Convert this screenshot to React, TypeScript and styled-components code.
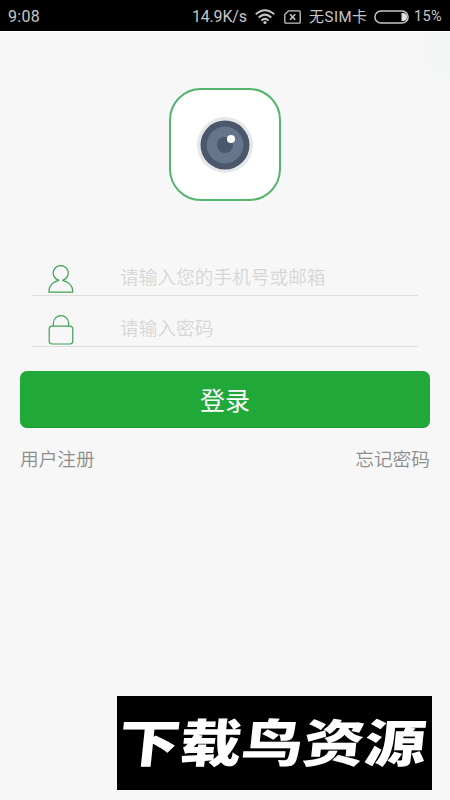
import React from "react";
import styled, { createGlobalStyle } from "styled-components";

const COLOR = {
  GREEN: "#20a838",
  ICON_GREEN: "#3da356",
  LINE: "#dedede",
  HINT: "#d6d6d6",
  TEXT: "#8d8d8d",
  STATUS: "#c6c6c6",
};

const GlobalStyle = createGlobalStyle`
  * {
    box-sizing: border-box;
  }

  body {
    margin: 0;
    background: #f7f7f7;
    font-family: Roboto, "Noto Sans CJK SC", sans-serif;
  }
`;

const Page = styled.div`
  display: flex;
  flex-direction: column;
  width: 450px;
  height: 800px;
  overflow: hidden;
  background: radial-gradient(circle at 455px 50px, #f3f6f4 0, #f7f7f7 65px);
`;

const StatusBar = styled.header`
  display: flex;
  flex: none;
  align-items: center;
  height: 31px;
  padding: 2px 8px 0;
  background: #000;
  color: ${COLOR.STATUS};
  line-height: 20px;
  white-space: nowrap;

  svg {
    display: block;
    flex: none;
  }
`;

const StatusText = styled.span<{ $width: number; $size?: number; $spacing?: number }>`
  flex: none;
  width: ${({ $width }) => $width}px;
  font-size: ${({ $size = 16 }) => $size}px;
  letter-spacing: ${({ $spacing = 0 }) => $spacing}px;
`;

const Spacer = styled.div<{ $width?: number }>`
  flex: ${({ $width }) => ($width ? `0 0 ${$width}px` : "1")};
`;

const Main = styled.main`
  display: flex;
  flex: 1;
  flex-direction: column;
  padding: 56px 20px 10px;
  border-top: 1px solid #fff;
`;

const Logo = styled.div`
  display: flex;
  flex: none;
  align-items: center;
  justify-content: center;
  align-self: center;
  width: 112px;
  height: 113px;
  border: 2px solid #53b56b;
  border-radius: 32px;
  background: #fff;
`;

const Form = styled.form`
  display: flex;
  flex-direction: column;
  margin-top: 44px;
`;

const Field = styled.label`
  display: flex;
  align-items: flex-end;
  height: 51px;
  margin: 0 12px;
  padding-left: 16px;
  border-bottom: 1px solid ${COLOR.LINE};

  svg {
    flex: none;
    margin-bottom: 1px;
  }
`;

const Input = styled.input`
  flex: 1;
  min-width: 0;
  height: 36px;
  margin: 0 0 2px 46px;
  padding: 0;
  border: 0;
  outline: 0;
  background: transparent;
  color: #555;
  font: 350 18.7px "Noto Sans CJK SC", sans-serif;

  &::placeholder {
    color: ${COLOR.HINT};
    opacity: 1;
  }
`;

const LoginButton = styled.button`
  height: 57px;
  margin-top: 24px;
  padding: 0;
  border: 0;
  border-bottom: 1px solid #1c9a34;
  border-radius: 7px;
  background: ${COLOR.GREEN};
  color: #fff;
  font: 25px "Noto Sans CJK SC", sans-serif;
`;

const Links = styled.nav`
  display: flex;
  justify-content: space-between;
  margin-top: 16px;
`;

const Link = styled.a`
  color: ${COLOR.TEXT};
  font: 350 18.7px/28px "Noto Sans CJK SC", sans-serif;
`;

const Banner = styled.footer`
  display: flex;
  align-items: center;
  justify-content: center;
  align-self: flex-end;
  width: 315px;
  height: 94px;
  margin: auto -2px 0 0;
  padding: 0 4px 6px 0;
  background: #000;
`;

const BannerText = styled.span`
  color: #fff;
  font: 900 61.5px/88px "Noto Sans CJK SC", sans-serif;
  white-space: nowrap;
  transform: skewX(-6deg) scaleY(0.83);
`;

const WifiIcon = () => (
  <svg width="20" height="16" viewBox="0 0 20 16" fill="none" stroke={COLOR.STATUS} strokeWidth="2">
    <path d="M.8 5.3Q10-2.8 19.2 5.3M3.7 8.6Q10 2.7 16.3 8.6M6.5 11.6Q10 8.2 13.5 11.6" />
    <circle cx="10" cy="13.5" r="1.6" fill={COLOR.STATUS} stroke="none" />
  </svg>
);

const NoSimIcon = () => (
  <svg width="17" height="14" viewBox="0 0 17 14" fill="none" stroke={COLOR.STATUS} strokeWidth="1.3">
    <path d="M4.5.8H15.2Q16.2.8 16.2 1.8V12.2Q16.2 13.2 15.2 13.2H1.8Q.8 13.2.8 12.2V4.5Z" />
    <path d="M6 4.3 11.2 9.7M11.2 4.3 6 9.7" strokeWidth="1.6" />
  </svg>
);

const BatteryIcon = () => (
  <svg width="35" height="14" viewBox="0 0 35 14">
    <rect x=".9" y=".9" width="33.2" height="12.2" rx="6.1" fill="none" stroke={COLOR.STATUS} strokeWidth="1.5" />
    <path d="M27.5 3H29a4 4 0 0 1 0 8h-1.5z" fill="#e2e2e2" />
  </svg>
);

const CameraIcon = () => (
  <svg width="56" height="56" viewBox="0 0 56 56">
    <circle cx="28" cy="28" r="28" fill="#e5e7e9" />
    <circle cx="28" cy="28" r="24.5" fill="#4b576b" />
    <circle cx="28" cy="28" r="18.4" fill="#66758c" />
    <circle cx="28" cy="28" r="8" fill="#4b576b" />
    <circle cx="34" cy="22" r="4" fill="#fff" />
  </svg>
);

const UserIcon = () => (
  <svg width="26" height="29" viewBox="0 0 26 29" fill="none" stroke={COLOR.ICON_GREEN} strokeWidth="1.2">
    <path d="M11 15.4A7.500 7.500 0 1 1 14.400 15.400C20 16.300 24.500 20.400 24.700 25.400V27.200H1V25.400C1.200 20.400 5.500 16.300 11 15.400Z" />
  </svg>
);

const LockIcon = () => (
  <svg width="26" height="31" viewBox="0 0 26 31" fill="none" stroke={COLOR.ICON_GREEN} strokeWidth="1.2">
    <rect x="1.2" y="12.2" width="23.6" height="17.8" rx="3" />
    <path d="M5.4 12.2V9.3a7.600 7.600 0 0 1 15.200 0v2.900" />
  </svg>
);

const App = (): React.JSX.Element => {
  return (
    <>
      <GlobalStyle />
      <Page>
        <StatusBar>
          <StatusText $width={40} $spacing={0.3}>9:08</StatusText>
          <Spacer />
          <StatusText $width={63} $spacing={-0.2}>14.9K/s</StatusText>
          <WifiIcon />
          <Spacer $width={9} />
          <NoSimIcon />
          <Spacer $width={8} />
          <StatusText $width={65} $size={15} $spacing={0.5}>无SIM卡</StatusText>
          <BatteryIcon />
          <Spacer $width={5} />
          <StatusText $width={28} $size={14.5} $spacing={0.3}>15%</StatusText>
        </StatusBar>
        <Main>
          <Logo>
            <CameraIcon />
          </Logo>
          <Form onSubmit={(e) => e.preventDefault()}>
            <Field>
              <UserIcon />
              <Input type="text" placeholder="请输入您的手机号或邮箱" />
            </Field>
            <Field>
              <LockIcon />
              <Input type="password" placeholder="请输入密码" />
            </Field>
            <LoginButton type="submit">登录</LoginButton>
          </Form>
          <Links>
            <Link>用户注册</Link>
            <Link>忘记密码</Link>
          </Links>
          <Banner>
            <BannerText>下载鸟资源</BannerText>
          </Banner>
        </Main>
      </Page>
    </>
  );
};

export default App;
